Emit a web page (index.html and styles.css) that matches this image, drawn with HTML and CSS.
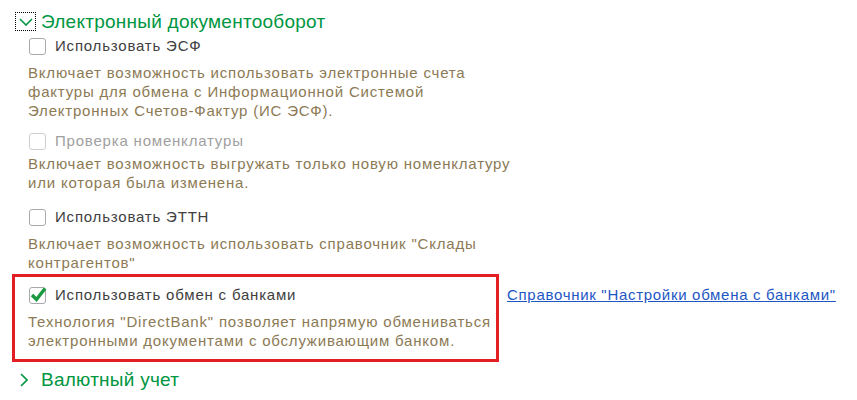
FILE: index.html
```html
<!DOCTYPE html>
<html lang="ru">
<head>
    <meta charset="UTF-8">
    <title>Электронный документооборот</title>
    <link rel="stylesheet" href="styles.css">
</head>
<body>
    <div class="group">
        <div class="group-head">
            <span class="toggle focused">
                <svg width="14" height="8" viewBox="0 0 14 8"><polyline points="1,1 7,7 13,1" fill="none" stroke="#00963f" stroke-width="1.6"/></svg>
            </span>
            <span class="group-title">Электронный документооборот</span>
        </div>
        <div class="group-body">
            <label class="check first">
                <span class="box"></span>
                Использовать ЭСФ
            </label>
            <p class="hint">Включает возможность использовать электронные счета<br>фактуры для обмена с Информационной Системой<br>Электронных Счетов-Фактур (ИС ЭСФ).</p>

            <label class="check disabled">
                <span class="box"></span>
                Проверка номенклатуры
            </label>
            <p class="hint tight">Включает возможность выгружать только новую номенклатуру<br>или которая была изменена.</p>

            <label class="check spaced">
                <span class="box"></span>
                Использовать ЭТТН
            </label>
            <p class="hint">Включает возможность использовать справочник "Склады<br>контрагентов"</p>

            <div class="option-row">
                <div class="highlight">
                    <label class="check">
                        <span class="box">
                            <svg width="17" height="16" viewBox="0 0 17 16"><polyline points="2,8 6.5,12.5 15,1.5" fill="none" stroke="#18993f" stroke-width="3.4"/></svg>
                        </span>
                        Использовать обмен с банками
                    </label>
                    <p class="hint">Технология "DirectBank" позволяет напрямую обмениваться<br>электронными документами с обслуживающим банком.</p>
                </div>
                <a class="link" href="#">Справочник "Настройки обмена с банками"</a>
            </div>
        </div>
    </div>

    <div class="group collapsed">
        <div class="group-head">
            <span class="toggle">
                <svg width="8" height="14" viewBox="0 0 8 14"><polyline points="1,1 7,7 1,13" fill="none" stroke="#00963f" stroke-width="1.6"/></svg>
            </span>
            <span class="group-title">Валютный учет</span>
        </div>
    </div>
</body>
</html>
```

FILE: styles.css
```css
body {
    margin: 0;
    padding: 11px 0 0 15px;
    background-color: #fff;
    font-family: "Liberation Sans", Arial, sans-serif;
    color: #404040;
}
.group-head {
    display: flex;
    align-items: center;
    gap: 5px;
    height: 21px;
}
.toggle {
    width: 21px;
    height: 19px;
    box-sizing: border-box;
    display: flex;
    align-items: center;
    justify-content: center;
    border: 1px solid transparent;
}
.toggle.focused {
    border: 1px dotted #000;
}
.group-title {
    font-size: 19px;
    line-height: 21px;
    letter-spacing: 0.25px;
    color: #00963f;
}
.group-body {
    padding-left: 13px;
}
.check {
    display: flex;
    align-items: center;
    gap: 9px;
    font-size: 15px;
    line-height: 18px;
    letter-spacing: 0.8px;
    margin-left: 1px;
    white-space: nowrap;
}
.check.first {
    margin-top: 5px;
}
.check.disabled {
    margin-top: 12px;
    color: #a0a0a0;
}
.check.disabled .box {
    border-color: #cfcfcf;
}
.check.spaced {
    margin-top: 16px;
}
.box {
    flex: none;
    width: 17px;
    height: 17px;
    box-sizing: border-box;
    border: 1px solid #a9a9a9;
    border-radius: 3px;
    background: #fff;
    position: relative;
}
.box svg {
    position: absolute;
    left: 0;
    top: -1px;
}
.hint {
    margin: 8px 0 0;
    font-size: 15px;
    line-height: 19px;
    letter-spacing: 0.8px;
    color: #8c7a55;
    white-space: nowrap;
}
.hint.tight {
    margin-top: 4px;
}
.option-row {
    display: flex;
    align-items: flex-start;
    gap: 8px;
    margin-top: 2px;
}
.highlight {
    flex: none;
    width: 487px;
    margin-left: -16px;
    padding: 9px 0 9px 13px;
    border: 3px solid #e31e24;
    box-sizing: border-box;
}
.highlight .hint {
    margin-top: 8px;
}
.link {
    margin-top: 12px;
    font-size: 15px;
    line-height: 18px;
    letter-spacing: 0.7px;
    color: #1d56c4;
    white-space: nowrap;
}
.collapsed {
    margin-top: 7px;
}
.collapsed .toggle {
    justify-content: flex-start;
    padding-left: 4px;
}
```
